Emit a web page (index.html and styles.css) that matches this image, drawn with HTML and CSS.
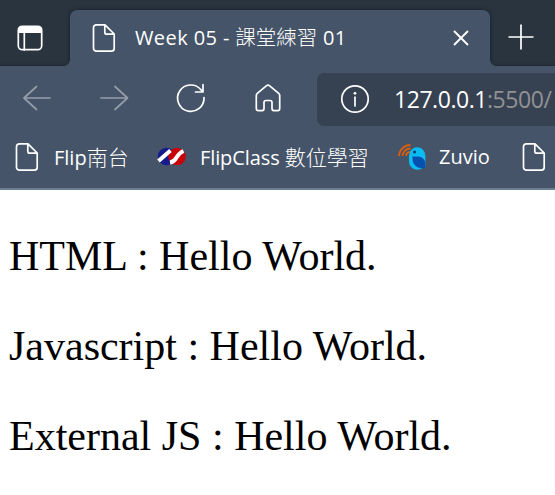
FILE: index.html
```html
<!DOCTYPE html>
<html lang="zh-Hant">
<head>
<meta charset="utf-8">
<title>Week 05 - 課堂練習 01</title>
<link rel="stylesheet" href="styles.css">
</head>
<body>
<svg class="defs" width="0" height="0"><symbol id="page" viewBox="0 0 24 30"><path d="M4.5 1.8H13L22.2 11V25.2a3 3 0 0 1-3 3H4.5a3 3 0 0 1-3-3V4.8a3 3 0 0 1 3-3ZM12.8 2v7.2a2 2 0 0 0 2 2H22"/></symbol></svg>
<header class="browser">
  <div class="tabstrip">
    <div class="workspace"><svg class="icon" width="26" height="26" viewBox="0 0 26 26"><rect x="1.3" y="1.3" width="23.4" height="23.4" rx="4"/><path class="solid" d="M1 8V5a4 4 0 0 1 4-4h16a4 4 0 0 1 4 4v3Z"/><path d="M7.3 8v17"/></svg></div>
    <div class="tab">
      <svg class="icon" width="24" height="30"><use href="#page"/></svg>
      <span class="tab-title">Week 05 - <span class="cjk">課堂練習</span> 01</span>
      <svg class="icon close" width="16" height="16" viewBox="0 0 16 16"><path d="M1 1l14 14M15 1L1 15"/></svg>
    </div>
    <svg class="icon plus" width="26" height="26" viewBox="0 0 26 26"><path d="M13 .5v25M.5 13h25"/></svg>
  </div>
  <div class="toolbar">
    <svg class="icon dim back" width="30" height="26" viewBox="0 0 30 26"><path d="M28 13H2M14.500 1.500L2 13l12.500 11.500"/></svg>
    <svg class="icon dim forward" width="30" height="26" viewBox="0 0 30 26"><path d="M1 13h26M15 1.500L27.500 13 15 24.500"/></svg>
    <svg class="icon reload" width="30" height="30" viewBox="0 0 30 30"><path d="M28 14.500A13.200 13.200 0 1 1 25 6.800L27 8.800M27 1.500v7.500h-7.500"/></svg>
    <svg class="icon home" width="26" height="28" viewBox="0 0 26 28"><path d="M1.300 11.500Q1.300 10.300 2.300 9.400L11.600 1.600Q13 .6 14.400 1.600L23.700 9.400Q24.700 10.300 24.700 11.500V24.500Q24.700 26.600 22.600 26.600H18.800Q17 26.600 17 24.600V18.400Q17 16.500 15 16.500H11Q9 16.500 9 18.400V24.600Q9 26.600 7.200 26.600H3.400Q1.300 26.600 1.300 24.500Z"/></svg>
    <div class="address">
      <svg class="icon info" width="30" height="30" viewBox="0 0 30 30"><circle cx="15" cy="15" r="13.200"/><path d="M15 13v9"/><circle class="dot" cx="15" cy="9.300" r="1.400"/></svg>
      <span class="url"><span class="host">127.0.0.1</span><span class="port">:5500/</span></span>
    </div>
  </div>
  <nav class="bookmarks">
    <svg class="icon bm-page" width="24" height="30"><use href="#page"/></svg>
    <span class="bm-flip">Flip<span class="cjk">南台</span></span>
    <svg class="flip-logo" width="30" height="20" viewBox="0 0 30 20"><circle cx="9.500" cy="9.500" r="8.700" fill="#171c8c"/><circle cx="20" cy="9.500" r="8.700" fill="#c90007"/><path d="M1.500 14L13.500 3.500M13 15.500Q17 15 19.500 10.500T26.500 4" fill="none" stroke="#fff" stroke-width="4"/></svg>
    <span class="bm-class">FlipClass <span class="cjk">數位學習</span></span>
    <svg class="zuvio-logo" width="28" height="28" viewBox="0 0 28 28"><path d="M1 13A11.500 11.500 0 0 1 12.500 2M4.500 13A8 8 0 0 1 12.500 5.500M8 13A4.500 4.500 0 0 1 12 9" fill="none" stroke="#d95e0c" stroke-width="1.800"/><path d="M11 12.500a8.200 8.200 0 0 1 16.400 0V25h-3Q22 26.700 19 26.700a8 8 0 0 1-8-8Z" fill="#0abcf2"/><path d="M14.500 13.500H20a7 7 0 0 1 7.300 7V25H23a9 9 0 0 1-8.500-8.500Z" fill="#0650b0"/><circle cx="16.500" cy="9" r="1.500" fill="#0b3474"/></svg>
    <span class="bm-zuvio">Zuvio</span>
    <svg class="icon bm-last" width="24" height="30"><use href="#page"/></svg>
  </nav>
</header>
<main>
  <p>HTML : Hello World.</p>
  <p>Javascript : Hello World.</p>
  <p>External JS : Hello World.</p>
</main>
</body>
</html>
```
FILE: styles.css
```css
* { box-sizing: border-box; }
body { margin: 0; width: 555px; height: 495px; overflow: hidden; background: #fff; }
.defs { display: block; }
.browser { height: 190px; overflow: hidden; background: #455469; border-bottom: 2px solid #6d7d92; color: #fff; font: 20px/28px "Open Sans", "Noto Sans CJK TC", sans-serif; white-space: nowrap; }
svg { flex: none; display: block; }
.icon { fill: none; stroke: #fff; stroke-width: 1.7; stroke-linejoin: round; stroke-linecap: round; overflow: visible; }
.icon .solid, .icon .dot { fill: #fff; stroke: none; }
.dim { stroke: #949ca8; }
.cjk { font-family: "Noto Sans CJK TC", sans-serif; font-size: 20.500px; font-weight: 300; letter-spacing: 0; }
.tabstrip { height: 66px; display: flex; align-items: flex-start; background: #2a343f; box-shadow: inset 0 -3px 3px -2px #1f2731; }
.workspace { width: 70px; padding: 25px 0 0 17px; }
.tab { width: 420px; height: 56px; margin-top: 10px; padding-left: 22px; display: flex; align-items: center; background: #455469; border-radius: 7px 7px 0 0; box-shadow: 0 0 4px #151c25; position: relative; clip-path: inset(-5px -6px 0 -6px); }
.tab::before, .tab::after { content: ""; position: absolute; bottom: 0; width: 6px; height: 6px; }
.tab::before { left: -6px; background: radial-gradient(circle at 0 0, transparent 5.5px, #455469 6px); }
.tab::after { right: -6px; background: radial-gradient(circle at 100% 0, transparent 5.5px, #455469 6px); }
.tab-title { flex: 1; margin: -2px 0 0 19px; letter-spacing: .4px; }
.close { margin-right: 21px; stroke-linecap: butt; stroke-width: 1.900; }
.plus { margin: 24px 0 0 18px; stroke-linecap: butt; }
.toolbar { height: 62px; display: flex; align-items: center; padding: 5px 0 3px 22px; }
.forward { margin-left: 48px; }
.reload { margin-left: 46px; }
.home { margin-left: 49px; }
.address { flex: 1; height: 53px; margin: 2px 0 0 36px; padding-left: 23px; display: flex; align-items: center; background: #364252; border-radius: 7px 0 0 7px; }
.url { margin-left: 24px; font-size: 23px; letter-spacing: -.45px; }
.port { color: #929292; }
.bookmarks { height: 60px; display: flex; align-items: center; padding: 0 0 2px 15px; }
.bookmarks > span { flex: none; margin-top: -1px; font-size: 20px; }
.bookmarks .cjk { font-size: 21px; }
.bookmarks .bm-flip { margin-left: 15px; width: 88px; }
.flip-logo { margin-left: 15px; }
.bookmarks .bm-class { margin-left: 13px; width: 198px; letter-spacing: -.1px; }
.bookmarks .bm-zuvio { margin-left: 13px; width: 83px; }
main { padding: 42px 8px 0 9px; font: 42px/48px "Liberation Serif", serif; color: #000; }
p { margin: 0 0 42px; white-space: nowrap; }
```
